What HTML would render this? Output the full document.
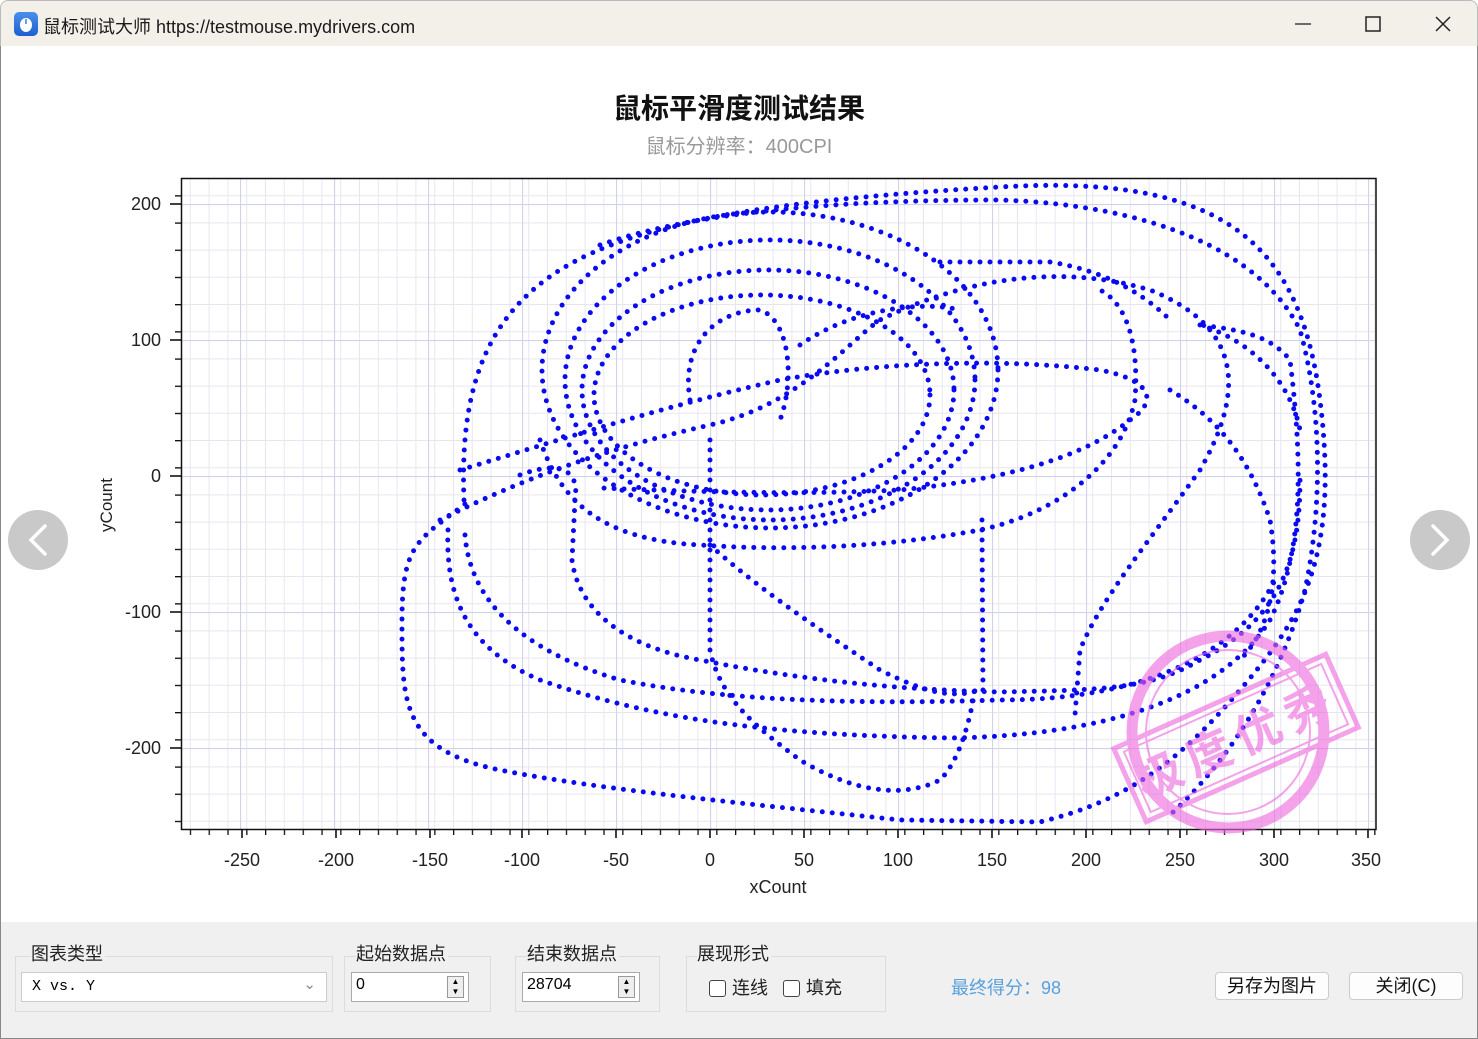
<!DOCTYPE html>
<html><head><meta charset="utf-8">
<style>
*{margin:0;padding:0;box-sizing:border-box}
body{width:1478px;height:1039px;overflow:hidden;background:#fff;font-family:"Liberation Sans","Noto Sans CJK SC",sans-serif;position:relative}
.tb{position:absolute;left:0;top:0;width:1478px;height:46px;background:#f3f0ea;border:1px solid #bbb;border-bottom:none;border-radius:8px 8px 0 0}
.tt{position:absolute;left:42px;top:12px;font-size:18px;color:#1a1a1a;white-space:nowrap}
.ic{position:absolute;left:13px;top:11px;width:24px;height:24px;border-radius:5px;background:linear-gradient(#4a90ea,#1d5fd0)}
.title{position:absolute;left:0;width:1478px;text-align:center;top:87px;font-size:28px;font-weight:bold;color:#111}
.sub{position:absolute;left:0;width:1478px;text-align:center;top:130px;font-size:20px;color:#999}
.bp{position:absolute;left:0;top:922px;width:1478px;height:117px;background:#f0f0f0;border-left:1px solid #888;border-right:1px solid #888}
.gb{position:absolute;border:1px solid #dcdcdc;height:56px;top:34px}
.lbl{position:absolute;font-size:18px;color:#222;background:#f0f0f0;top:18px;padding-right:2px}
.inp{position:absolute;background:#fff;border:1px solid #aaa}
.btn{position:absolute;top:50px;height:28px;background:#fdfdfd;border:1px solid #ccc;border-radius:4px;font-size:18px;text-align:center;line-height:26px;color:#111}
.cb{display:inline-block;width:17px;height:17px;border:1.5px solid #444;border-radius:3px;vertical-align:-3px;margin-right:6px;background:#fff}
</style></head><body>
<div class="tb"><div class="ic"><svg width="24" height="24"><ellipse cx="12" cy="13" rx="6" ry="7" fill="#fff"/><line x1="12" y1="7" x2="12" y2="12" stroke="#3a7be0" stroke-width="1.5"/></svg></div>
<div class="tt">鼠标测试大师 https://testmouse.mydrivers.com</div>
<svg style="position:absolute;left:1290px;top:12px" width="170" height="24"><line x1="4" y1="11" x2="20" y2="11" stroke="#222" stroke-width="1.3"/><rect x="75" y="4" width="14" height="14" fill="none" stroke="#222" stroke-width="1.5"/><path d="M145 4 L159 18 M159 4 L145 18" stroke="#222" stroke-width="1.5"/></svg>
</div>
<div style="position:absolute;left:0;top:46px;width:1px;height:876px;background:#888"></div>
<div style="position:absolute;right:0;top:46px;width:1px;height:876px;background:#888"></div>
<div class="title">鼠标平滑度测试结果</div>
<div class="sub">鼠标分辨率：400CPI</div>

<svg style="position:absolute;left:0;top:0" width="1478" height="922">
<defs>
<pattern id="gx" patternUnits="userSpaceOnUse" x="1.8" y="0" width="18.8" height="10"><line x1="0.5" y1="0" x2="0.5" y2="10" stroke="#e6e6f2" stroke-width="1"/></pattern>
<pattern id="gy" patternUnits="userSpaceOnUse" x="0" y="4.8" width="10" height="27.2"><line x1="0" y1="0.5" x2="10" y2="0.5" stroke="#e6e6f2" stroke-width="1"/></pattern>
<pattern id="Gx" patternUnits="userSpaceOnUse" x="146" y="0" width="94" height="10"><line x1="0.5" y1="0" x2="0.5" y2="10" stroke="#d2d2ea" stroke-width="1.2"/></pattern>
<pattern id="Gy" patternUnits="userSpaceOnUse" x="0" y="68" width="10" height="136"><line x1="0" y1="0.5" x2="10" y2="0.5" stroke="#d2d2ea" stroke-width="1.2"/></pattern>
<pattern id="tx" patternUnits="userSpaceOnUse" x="1.8" y="0" width="18.8" height="20"><line x1="0.6" y1="0" x2="0.6" y2="20" stroke="#111" stroke-width="1.4"/></pattern>
<pattern id="ty" patternUnits="userSpaceOnUse" x="0" y="4.8" width="20" height="27.2"><line x1="0" y1="0.6" x2="20" y2="0.6" stroke="#111" stroke-width="1.4"/></pattern>
</defs>
<rect x="181" y="178" width="1195" height="651" fill="url(#gx)"/>
<rect x="181" y="178" width="1195" height="651" fill="url(#gy)"/>
<rect x="181" y="178" width="1195" height="651" fill="url(#Gx)"/>
<rect x="181" y="178" width="1195" height="651" fill="url(#Gy)"/>
<rect x="182" y="830" width="1194" height="5" fill="url(#tx)"/>
<rect x="175" y="179" width="6" height="650" fill="url(#ty)"/>
<g stroke="#111" stroke-width="1.6">
<line x1="242" y1="830" x2="242" y2="838"/><line x1="336" y1="830" x2="336" y2="838"/><line x1="430" y1="830" x2="430" y2="838"/><line x1="522" y1="830" x2="522" y2="838"/><line x1="616" y1="830" x2="616" y2="838"/><line x1="710" y1="830" x2="710" y2="838"/><line x1="804" y1="830" x2="804" y2="838"/><line x1="898" y1="830" x2="898" y2="838"/><line x1="992" y1="830" x2="992" y2="838"/><line x1="1086" y1="830" x2="1086" y2="838"/><line x1="1180" y1="830" x2="1180" y2="838"/><line x1="1274" y1="830" x2="1274" y2="838"/><line x1="1368" y1="830" x2="1368" y2="838"/>
<line x1="170" y1="204" x2="181" y2="204"/><line x1="170" y1="340" x2="181" y2="340"/><line x1="170" y1="476" x2="181" y2="476"/><line x1="170" y1="612" x2="181" y2="612"/><line x1="170" y1="748" x2="181" y2="748"/>
</g>
<rect x="181.5" y="178.5" width="1194.5" height="651" fill="none" stroke="#111" stroke-width="1.5"/>
<g font-size="18" fill="#222" text-anchor="middle" font-family="Liberation Sans,sans-serif">
<text x="242" y="866">-250</text><text x="336" y="866">-200</text><text x="430" y="866">-150</text><text x="522" y="866">-100</text><text x="616" y="866">-50</text><text x="710" y="866">0</text><text x="804" y="866">50</text><text x="898" y="866">100</text><text x="992" y="866">150</text><text x="1086" y="866">200</text><text x="1180" y="866">250</text><text x="1274" y="866">300</text><text x="1366" y="866">350</text>
<text x="778" y="893">xCount</text>
</g>
<g font-size="18" fill="#222" text-anchor="end" font-family="Liberation Sans,sans-serif">
<text x="161" y="210">200</text><text x="161" y="346">100</text><text x="161" y="482">0</text><text x="161" y="618">-100</text><text x="161" y="754">-200</text>
</g>
<text x="0" y="0" font-size="17" fill="#222" text-anchor="middle" transform="translate(112,505) rotate(-90)">yCount</text>

<g fill="none" stroke="#0a0af0" stroke-width="5" stroke-linecap="round" stroke-dasharray="0 10">
<path d="M464,500 C460,400 480,320 560,270 S780,200 1000,187 S1300,240 1320,400 S1300,620 1240,690 S1130,800 1040,822 L900,820 C760,805 600,790 500,770 S402,700 402,620 S420,540 470,500"/>
<path d="M600,245 C700,210 850,200 1000,200 C1150,205 1260,250 1300,330 C1325,420 1320,520 1305,590 C1280,680 1230,760 1170,815"/>
<path d="M448,530 C445,600 470,650 540,680 C640,715 750,735 950,738 C1100,736 1220,700 1270,620 C1300,560 1305,480 1290,360 C1270,335 1240,330 1200,325"/>
<path d="M465,535 C470,600 520,650 620,680 C720,700 850,705 1000,700 C1150,700 1240,650 1275,580"/>
<path d="M460,470 C560,440 650,410 780,380 C880,362 1000,358 1100,370 C1150,380 1160,400 1130,420 C1080,460 1000,480 900,490 C800,495 700,492 600,488"/>
<path d="M440,520 C520,480 600,450 710,425 C800,405 850,340 880,320 C950,285 1050,260 1150,290 C1250,330 1240,400 1200,470 C1150,540 1100,600 1080,650 L1075,715"/>
<ellipse cx="770" cy="370" rx="228" ry="158"/>
<ellipse cx="770" cy="380" rx="205" ry="140"/>
<ellipse cx="768" cy="390" rx="186" ry="120"/>
<ellipse cx="762" cy="395" rx="168" ry="100"/>
<path d="M540,440 C560,500 600,540 700,545 C800,552 900,545 980,530 C1050,515 1120,470 1135,400 C1140,330 1120,300 1100,290"/>
<path d="M710,545 C760,590 820,630 880,670 C920,690 950,700 980,690"/>
<path d="M982,520 L983,690"/>
<path d="M710,440 L710,650 C720,700 760,730 800,760 C850,790 900,800 940,780 C960,760 970,720 975,690"/>
<path d="M690,400 C680,340 720,310 760,310 C790,320 795,380 780,420"/>
<path d="M800,345 C850,310 920,300 960,310"/>
<path d="M520,475 C560,460 580,470 575,500 L572,560 C580,620 640,650 700,660 C800,680 900,690 1000,692 C1100,690 1150,690 1200,660 C1280,620 1300,560 1300,480"/>
<path d="M940,262 L1050,262 C1100,270 1140,290 1170,320"/>
<path d="M1200,325 C1250,340 1290,380 1300,430"/>
<path d="M1170,390 C1220,420 1250,460 1270,520 C1280,580 1270,630 1240,660"/>
</g>

<g opacity="0.6" fill="none" stroke="#ee66dd">
<circle cx="1228" cy="732" r="96" stroke-width="11"/>
<circle cx="1228" cy="732" r="82" stroke-width="2"/>
<g transform="rotate(-24 1236 738)">
<rect x="1120" y="698" width="232" height="80" stroke-width="5"/>
<rect x="1128" y="705" width="216" height="66" stroke-width="2"/>
<text x="1236" y="757" font-size="46" fill="#ee66dd" stroke="none" text-anchor="middle" font-family="Noto Sans CJK SC,sans-serif" font-weight="bold" letter-spacing="8">极度优秀</text>
</g>
</g>

<circle cx="38" cy="540" r="30" fill="#c9c9c9"/>
<path d="M45,526 L31,540 L45,554" fill="none" stroke="#fff" stroke-width="3.5" stroke-linecap="round"/>
<circle cx="1440" cy="540" r="30" fill="#c9c9c9"/>
<path d="M1433,526 L1447,540 L1433,554" fill="none" stroke="#fff" stroke-width="3.5" stroke-linecap="round"/>
</svg>

<div class="bp">
<div class="gb" style="left:14px;width:318px"></div><div class="lbl" style="left:30px">图表类型</div>
<div class="inp" style="left:20px;top:50px;width:306px;height:30px;border-color:#ccc;font-family:'Liberation Mono',monospace;font-size:15px;padding:5px 10px">X vs. Y<span style="position:absolute;right:10px;top:2px;color:#888;font-family:'Liberation Sans'">&#8964;</span></div>
<div class="gb" style="left:343px;width:147px"></div><div class="lbl" style="left:355px">起始数据点</div>
<div class="inp" style="left:350px;top:50px;width:118px;height:30px;font-size:16px;padding:3px 4px">0<div style="position:absolute;right:4px;top:3px;width:17px;height:22px;border:1px solid #999;background:#eee;font-size:8px;line-height:10px;text-align:center">▲<br>▼</div></div>
<div class="gb" style="left:514px;width:145px"></div><div class="lbl" style="left:526px">结束数据点</div>
<div class="inp" style="left:521px;top:50px;width:118px;height:30px;font-size:16px;padding:3px 4px">28704<div style="position:absolute;right:4px;top:3px;width:17px;height:22px;border:1px solid #999;background:#eee;font-size:8px;line-height:10px;text-align:center">▲<br>▼</div></div>
<div class="gb" style="left:685px;width:200px"></div><div class="lbl" style="left:696px">展现形式</div>
<div style="position:absolute;left:708px;top:52px;font-size:18px;color:#222"><span class="cb"></span>连线&nbsp;&nbsp;&nbsp;<span class="cb"></span>填充</div>
<div style="position:absolute;left:950px;top:52px;font-size:18px;color:#5aa0dc">最终得分：98</div>
<div class="btn" style="left:1214px;width:114px">另存为图片</div>
<div class="btn" style="left:1348px;width:114px">关闭(C)</div>
</div>
<div style="position:absolute;left:0;top:1038px;width:1478px;height:1px;background:#888"></div>
</body></html>
